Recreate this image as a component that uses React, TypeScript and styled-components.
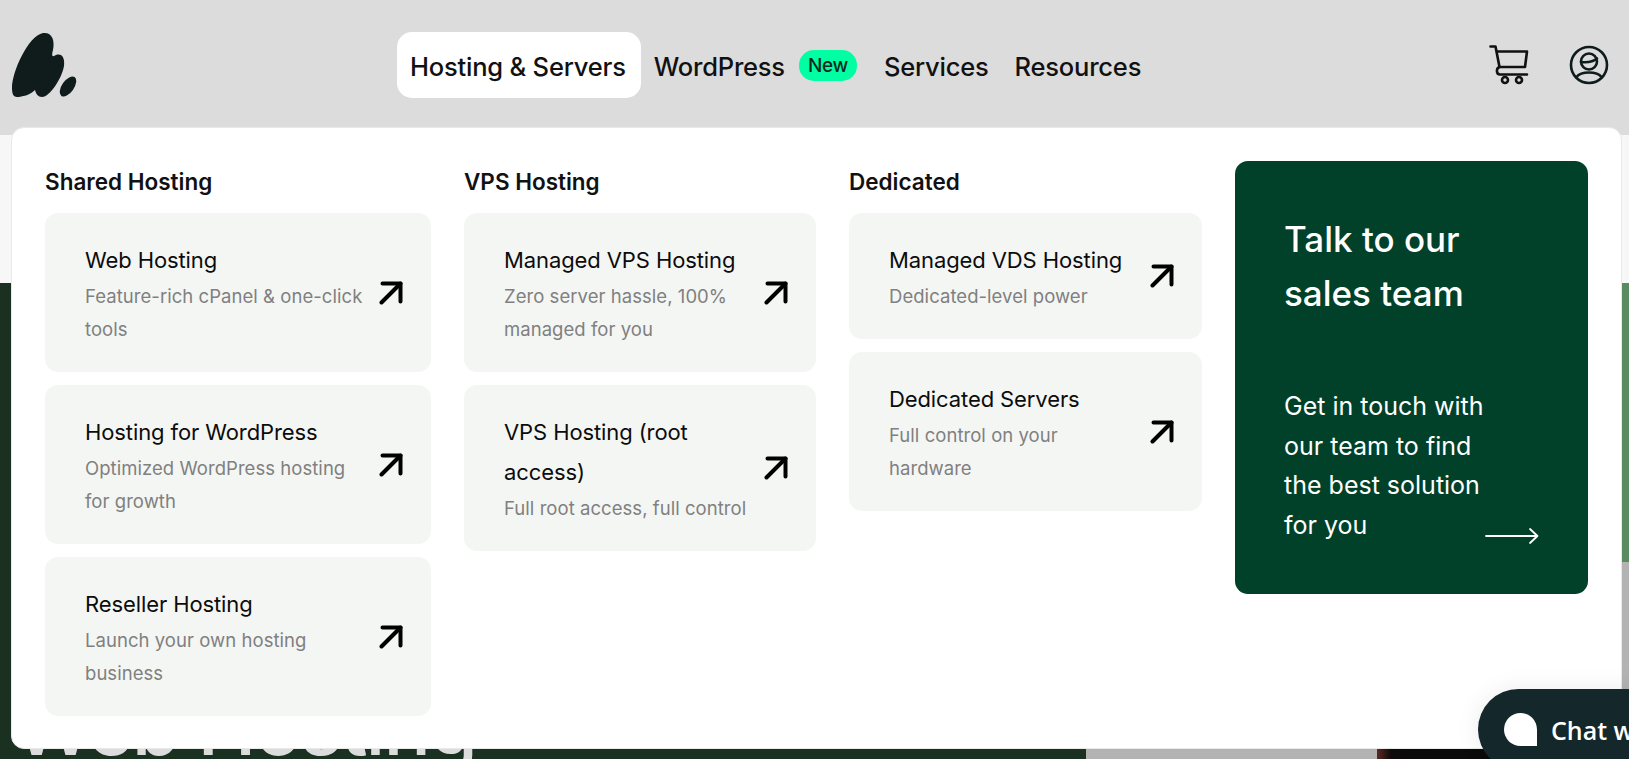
import React from "react";
import styled, { createGlobalStyle } from "styled-components";

const GlobalStyle = createGlobalStyle`
  html, body { margin: 0; padding: 0; height: 100%; overflow: hidden; }
  body { font-family: "Inter", "Liberation Sans", sans-serif; background: #f7f7f7; color: #111; }
  #root { height: 100%; }
`;

const Page = styled.div`
  position: relative;
  height: 759px;
  overflow: hidden;
`;

const Header = styled.header`
  height: 135px;
  background: #dcdcdc;
  display: flex;
  align-items: flex-start;
  padding: 32px 20px 0 11px;
  box-sizing: border-box;
`;

const Logo = styled.svg`
  width: 66px;
  height: 66px;
  flex: none;
`;

const Nav = styled.nav`
  display: flex;
  align-items: center;
  height: 66px;
  margin-left: 320px;
  flex: 1;
`;

const NavItem = styled.a<{ $active?: boolean }>`
  display: flex;
  align-items: center;
  height: 66px;
  padding: 2px ${(p) => (p.$active ? "15px" : "13px")} 0 13px;
  box-sizing: border-box;
  border-radius: 15px;
  font-size: 25.5px;
  font-weight: 500;
  letter-spacing: -0.2px;
  color: #111;
  background: ${(p) => (p.$active ? "#fff" : "transparent")};
`;

const NewBadge = styled.span`
  display: flex;
  align-items: center;
  justify-content: center;
  width: 58px;
  height: 31px;
  margin: 0 14px 0 1px;
  border-radius: 15px;
  background: #00ffa3;
  font-size: 19px;
  font-weight: 500;
  letter-spacing: -0.4px;
  color: #0a2a1f;
`;

const HeaderIcons = styled.div`
  display: flex;
  align-items: center;
  gap: 40px;
  height: 66px;
`;

const Strip = styled.div`
  height: 148px;
  background: #f7f7f7;
`;

const Hero = styled.section`
  display: flex;
  height: 476px;
`;

const HeroLeft = styled.div`
  width: 1086px;
  background: #1a3020;
  display: flex;
  align-items: flex-end;
  padding: 0 0 0 14px;
  box-sizing: border-box;
`;

const HeroTitle = styled.h1`
  margin: 0 0 -11px;
  font-size: 79px;
  line-height: 1.1;
  font-weight: 500;
  letter-spacing: -2px;
  color: #dcdcdc;
`;

const HeroImage = styled.div`
  position: relative;
  flex: 1;
  display: grid;
  grid-template-rows: 279px 1fr;
`;

const ImageTop = styled.div`
  background: #5a8a5f;
`;

const ImageBottom = styled.div`
  background: #b3b3b3;
`;

const Person = styled.div`
  position: absolute;
  left: 291px;
  right: 0;
  bottom: 0;
  height: 24px;
  background: linear-gradient(90deg, #5c2a20 0, #0c0a0a 14px, #0a0a0a 100%);
`;

const Panel = styled.div`
  position: absolute;
  left: 11px;
  top: 127px;
  width: 1611px;
  height: 622px;
  box-sizing: border-box;
  background: #fff;
  border: 1px solid #e9e9e9;
  border-radius: 13px;
  padding: 33px;
  display: grid;
  grid-template-columns: 386px 352px 353px 353px;
  column-gap: 33px;
  align-items: start;
`;

const Column = styled.div`
  display: flex;
  flex-direction: column;
  gap: 13px;
`;

const ColumnTitle = styled.h3`
  margin: 1px 0 -1px;
  height: 39px;
  line-height: 39px;
  font-size: 22.5px;
  font-weight: 600;
  letter-spacing: 0;
  color: #111;
`;

const Card = styled.a`
  display: flex;
  align-items: center;
  gap: 8px;
  padding: 26.5px 28px 26.5px 40px;
  background: #f4f6f4;
  border-radius: 13px;
`;

const CardText = styled.div`
  flex: 1;
  min-width: 0;
`;

const CardTitle = styled.div`
  font-size: 22px;
  line-height: 40px;
  font-weight: 400;
  letter-spacing: -0.1px;
  color: #0c0c0c;
`;

const CardDesc = styled.div`
  font-size: 18.5px;
  line-height: 33px;
  letter-spacing: 0.05px;
  color: #808080;
`;

const ArrowIcon = styled.svg`
  width: 24px;
  height: 24px;
  flex: none;
`;

const SalesCard = styled.a`
  position: relative;
  display: flex;
  flex-direction: column;
  height: 433px;
  box-sizing: border-box;
  background: #01412a;
  border-radius: 13px;
  padding: 51px 49px 0;
  color: #fff;
`;

const SalesTitle = styled.div`
  font-size: 35px;
  line-height: 54px;
  font-weight: 500;
  letter-spacing: 0;
`;

const SalesText = styled.div`
  margin-top: 67px;
  width: 215px;
  font-size: 25px;
  line-height: 39.7px;
  letter-spacing: 0;
`;

const SalesArrow = styled.svg`
  position: absolute;
  right: 49px;
  bottom: 49px;
  width: 54px;
  height: 18px;
`;

const ChatButton = styled.a`
  position: absolute;
  left: 1478px;
  top: 689px;
  width: 260px;
  height: 81px;
  display: flex;
  align-items: center;
  gap: 14px;
  padding-left: 26px;
  box-sizing: border-box;
  border-radius: 41px;
  background: #14282c;
  box-shadow: 0 0 24px rgba(0, 0, 0, 0.08);
  color: #fff;
  font-family: "Open Sans", "Liberation Sans", sans-serif;
  font-size: 25px;
  font-weight: 600;
  white-space: nowrap;
`;

const ChatBubble = styled.span`
  width: 33px;
  height: 33px;
  flex: none;
  background: #fff;
  border-radius: 50% 50% 0 50%;
`;

type LinkItem = { title: string; desc: string };

const columns: { title: string; items: LinkItem[] }[] = [
  {
    title: "Shared Hosting",
    items: [
      { title: "Web Hosting", desc: "Feature-rich cPanel & one-click tools" },
      { title: "Hosting for WordPress", desc: "Optimized WordPress hosting for growth" },
      { title: "Reseller Hosting", desc: "Launch your own hosting business" },
    ],
  },
  {
    title: "VPS Hosting",
    items: [
      { title: "Managed VPS Hosting", desc: "Zero server hassle, 100% managed for you" },
      { title: "VPS Hosting (root access)", desc: "Full root access, full control" },
    ],
  },
  {
    title: "Dedicated",
    items: [
      { title: "Managed VDS Hosting", desc: "Dedicated-level power" },
      { title: "Dedicated Servers", desc: "Full control on your hardware" },
    ],
  },
];

const NorthEast = () => (
  <ArrowIcon viewBox="0 0 24 24" fill="none" stroke="#000" strokeWidth="4" strokeLinecap="round" strokeLinejoin="round">
    <path d="M2.5 21.5L21.5 2.5" />
    <path d="M3.5 2.5H21.5V20.5" />
  </ArrowIcon>
);

export default function App() {
  return (
    <Page>
      <GlobalStyle />
      <Header>
        <Logo viewBox="11 32 66 66">
          <path
            fill="#101c1b"
            d="M12 88C12 72 28 36 43 33C52 32 55 40 53 50C51 57 53 57 56 55C62 53 65 58 64 66C62 78 50 97 42 97C38 97 36 94 35 90C30 95 22 97 17 97C13 97 12 93 12 88Z"
          />
          <ellipse cx="68" cy="86.5" rx="6" ry="11.5" transform="rotate(35 68 86.5)" fill="#101c1b" />
        </Logo>
        <Nav>
          <NavItem $active>Hosting &amp; Servers</NavItem>
          <NavItem>WordPress</NavItem>
          <NewBadge>New</NewBadge>
          <NavItem>Services</NavItem>
          <NavItem>Resources</NavItem>
        </Nav>
        <HeaderIcons>
          <svg width="40" height="40" viewBox="0 0 40 40" fill="none" stroke="#111" strokeWidth="2.6" strokeLinecap="round" strokeLinejoin="round">
            <path d="M1.5 1.5H6.5L10.5 22H36L38 6.5H7.5" />
            <path d="M10.5 22C7 23 7 29.5 11 29.5H38" />
            <circle cx="16" cy="35" r="3" />
            <circle cx="30" cy="35" r="3" />
          </svg>
          <svg width="40" height="40" viewBox="0 0 40 40" fill="none" stroke="#0e1c1c" strokeWidth="2.6" strokeLinecap="round">
            <circle cx="20" cy="20" r="18" />
            <circle cx="20" cy="16.5" r="8" />
            <path d="M12 17C17 17.5 24 17 28 13.5" />
            <path d="M7.5 32C12 26 28 26 32.5 32" />
          </svg>
        </HeaderIcons>
      </Header>
      <Strip />
      <Hero>
        <HeroLeft>
          <HeroTitle>Web Hosting</HeroTitle>
        </HeroLeft>
        <HeroImage>
          <ImageTop />
          <ImageBottom />
          <Person />
        </HeroImage>
      </Hero>
      <Panel>
        {columns.map((col) => (
          <Column key={col.title}>
            <ColumnTitle>{col.title}</ColumnTitle>
            {col.items.map((item) => (
              <Card key={item.title}>
                <CardText>
                  <CardTitle>{item.title}</CardTitle>
                  <CardDesc>{item.desc}</CardDesc>
                </CardText>
                <NorthEast />
              </Card>
            ))}
          </Column>
        ))}
        <SalesCard>
          <SalesTitle>
            Talk to our
            <br />
            sales team
          </SalesTitle>
          <SalesText>Get in touch with our team to find the best solution for you</SalesText>
          <SalesArrow viewBox="0 0 54 18" fill="none" stroke="#fff" strokeWidth="1.8" strokeLinecap="round" strokeLinejoin="round">
            <path d="M1 9H52" />
            <path d="M45 2L52.5 9L45 16" />
          </SalesArrow>
        </SalesCard>
      </Panel>
      <ChatButton>
        <ChatBubble />
        Chat with us
      </ChatButton>
    </Page>
  );
}
